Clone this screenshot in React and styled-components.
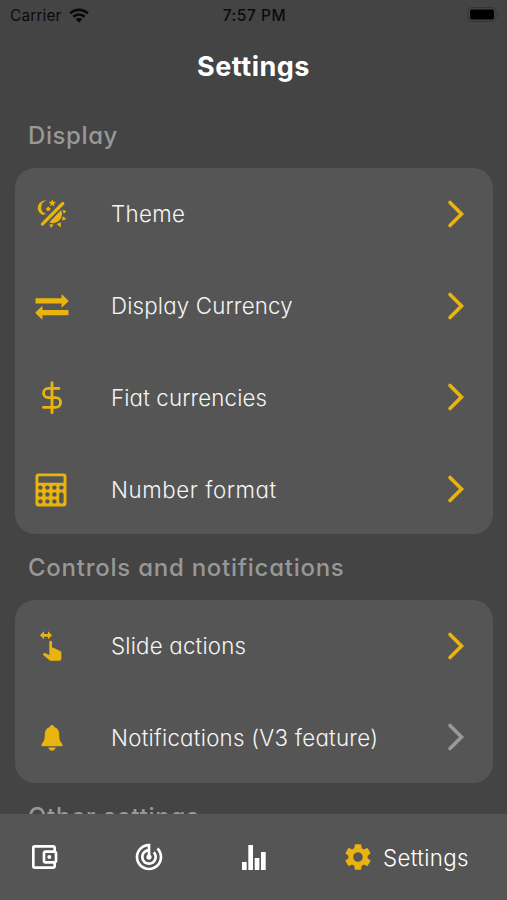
import React from "react";
import styled, { createGlobalStyle } from "styled-components";
import { MdSettings, MdTrackChanges, MdOutlineAccountBalanceWallet } from "react-icons/md";

const GOLD = "#eab40f";

const GlobalStyle = createGlobalStyle`
  * { box-sizing: border-box; }
  html, body { margin: 0; background: #444; }
  body { font-family: Inter, "Open Sans", sans-serif; font-feature-settings: "cv11", "ss03"; overflow: hidden; }
`;

const Screen = styled.div`
  width: 507px;
  height: 900px;
  display: flex;
  flex-direction: column;
  background: #444;
  color: #f4f4f4;
  overflow: hidden;
`;

const StatusBar = styled.header`
  height: 30px;
  flex: none;
  display: grid;
  grid-template-columns: 1fr auto 1fr;
  align-items: center;
  padding: 0 8px 0 10px;
  color: #0b0b0b;
  font-size: 15.5px;
  font-weight: 400;
  font-feature-settings: normal;
`;

const Carrier = styled.div`
  display: flex;
  align-items: center;
  gap: 7px;
  letter-spacing: 0.1px;
`;

const Clock = styled.div`
  font-weight: 550;
  letter-spacing: 0.55px;
`;

const BatterySlot = styled.div`
  display: flex;
  justify-content: flex-end;
`;

const Title = styled.h1`
  margin: 0;
  height: 72px;
  padding-top: 1px;
  flex: none;
  display: flex;
  align-items: center;
  justify-content: center;
  font-size: 27px;
  font-weight: 650;
  letter-spacing: 0.5px;
  color: #fff;
`;

const Content = styled.main`
  flex: 1;
  min-height: 0;
  overflow: hidden;
  padding: 0 14px 0 15px;
`;

const SectionTitle = styled.h2`
  margin: 0;
  height: 66px;
  padding-left: 13px;
  display: flex;
  align-items: center;
  font-size: 24px;
  font-weight: 500;
  letter-spacing: ${(p) => p.$track}px;
  color: #989898;
  white-space: nowrap;
`;

const Card = styled.section`
  height: ${(p) => p.$rows * 91.5}px;
  background: #555;
  border-radius: 20px;
`;

const Row = styled.div`
  height: ${(p) => p.$height}px;
  display: grid;
  grid-template-columns: 74px 1fr 20px;
  align-items: center;
  padding: 0 27px 0 0;
  color: ${GOLD};
`;

const IconSlot = styled.div`
  display: flex;
  justify-content: center;
  svg { display: block; }
`;

const Label = styled.span`
  padding-left: 22px;
  font-size: 22.3px;
  font-weight: 340;
  letter-spacing: ${(p) => p.$track}px;
  color: #f4f4f4;
  white-space: nowrap;
`;

const Chevron = styled.svg`
  display: block;
  width: 20px;
  height: 30px;
  fill: none;
  stroke: ${(p) => (p.$muted ? "#999" : GOLD)};
  stroke-width: 3.6;
  stroke-linecap: round;
`;

const TabBar = styled.nav`
  flex: none;
  height: 86px;
  background: #555;
  display: grid;
  grid-template-columns: 97px 104px 105px 201px;
  align-items: center;
`;

const Tab = styled.div`
  display: flex;
  align-items: center;
  justify-content: ${(p) => (p.$active ? "flex-start" : "center")};
  padding-left: ${(p) => p.$pad || 0}px;
  padding-right: ${(p) => p.$end || 0}px;
  color: #fff;
  svg { flex: none; color: ${(p) => (p.$active ? GOLD : "#fff")}; }
`;

const TabLabel = styled.span`
  margin-left: 9px;
  font-size: 22.3px;
  font-weight: 340;
  letter-spacing: 0.35px;
`;

const Wifi = () => (
  <svg width="20" height="15" viewBox="0 0 20 15" fill="none" stroke="#080808" strokeWidth="2.7">
    <path d="M1.2 5.4A12.6 12.6 0 0 1 18.8 5.4" />
    <path d="M4.4 8.8A8 8 0 0 1 15.6 8.8" />
    <path d="M10 14.6L6.8 11.3A4.6 4.6 0 0 1 13.2 11.3Z" fill="#080808" stroke="none" />
  </svg>
);

const Battery = () => (
  <svg width="33" height="16" viewBox="-.5 .5 33 16">
    <rect x="1.5" y="1" width="28" height="14" rx="4" fill="none" stroke="#343434" strokeWidth="1" />
    <rect x="3.5" y="3" width="24" height="10" rx="2" fill="#000" />
    <path d="M31 5.5q1.6 2.5 0 5z" fill="#343434" />
  </svg>
);

const ThemeIcon = () => (
  <svg width="30" height="30" viewBox="-1 -.5 30 30" fill={GOLD} overflow="visible">
    <path d="M8.6 1.2A7.4 7.4 0 0 0 4.6 15.4L8 14.4A6.8 6.8 0 0 1 8.6 1.2Z" />
    <path d="M14.3 0l1.1 2.2 2.5.3-1.9 1.8.5 2.5-2.2-1.3-2.2 1.3.5-2.5-1.9-1.8 2.5-.3z" />
    <path d="M10.3 6.8l1 1.5 1.7.3-1.2 1.3.2 1.8-1.7-.8-1.7.8.2-1.8-1.2-1.3 1.7-.3z" />
    <path d="M24.8 4L4.4 24.6" stroke={GOLD} strokeWidth="3.2" strokeLinecap="round" />
    <path d="M23 10.6A9 9 0 0 1 11.4 22.8Z" />
    <path d="M24.6 10.2l3.8 1.2-2.6 3zM25 16.8l3.4 3-4.6 1.3zM18.6 24.4l4.2-1.4.2 5zM11.4 24.7l4.2.2-2.7 3.5z" />
  </svg>
);

const SwapIcon = () => (
  <svg width="34" height="28" viewBox="0 -2 34 28" fill={GOLD}>
    <path d="M1 4.3H26.5V1.1Q26.5 0 27.4.8L33.1 6.2Q33.8 7 33.1 7.8L27.4 13.1Q26.5 13.8 26.5 12.8V9.5H1Q.5 9.5.5 9V4.8Q.5 4.3 1 4.3Z" />
    <path d="M33 16.1H7.5V12.9Q7.5 11.8 6.6 12.6L.9 18Q.2 18.8.9 19.6L6.6 24.9Q7.5 25.6 7.5 24.6V21.3H33Q33.5 21.3 33.5 20.8V16.6Q33.5 16.1 33 16.1Z" />
  </svg>
);

const DollarIcon = () => (
  <svg width="22" height="34" viewBox="0 -.7 22 34" fill="none" stroke={GOLD} strokeWidth="2.8" strokeLinecap="round">
    <path d="M11 2V32" />
    <path d="M18 7.7H7.2A4.6 4.6 0 0 0 7.2 17H14.8A4.7 4.7 0 0 1 14.8 26.6H2.3" />
  </svg>
);

const CalculatorIcon = () => (
  <svg width="34" height="35" viewBox="0 -1 34 35">
    <rect x=".5" y=".5" width="31" height="33" rx="3" fill={GOLD} />
    <rect x="3.4" y="3.2" width="25.2" height="6.6" rx=".8" fill="#555" />
    {[14.6, 21.5, 28.4].map((y, r) =>
      [5.4, 12.4, 19.4, 26.4].map((x, c) =>
        c === 3 && r > 0 ? null : <circle key={`${r}-${c}`} cx={x} cy={y} r="2.2" fill="#555" />
      )
    )}
    <rect x="24.2" y="19.3" width="4.4" height="11.3" rx="2.2" fill="#555" />
  </svg>
);

const SwipeIcon = () => (
  <svg width="32" height="32" viewBox="0 0 24 24" fill={GOLD}>
    <path d="M6 1L3 4L6 7V5H9V7L12 4L9 1V3H6V1M11 8A1 1 0 0 0 10 9V19L6.8 17.28H6.58C6.3 17.28 6.03 17.39 5.84 17.6L5 18.37L9.9 22.57C10.16 22.84 10.5 23 10.9 23H17.5C18.32 23 19 22.29 19 21.5V17.14C19 16.56 18.68 16.03 18.15 15.79L13.15 13.29L12 13.16V9A1 1 0 0 0 11 8Z" />
  </svg>
);

const BellIcon = () => (
  <svg width="22" height="27" viewBox="0 -.5 22 27" fill={GOLD}>
    <path d="M11 .5C12.4.5 13 1.4 13.2 2.4C16.6 3.4 18.2 6.4 18.2 9.6C18.2 15.8 19.5 17.4 21 19.1C22.1 20.4 21.4 21.7 20 21.7H2C.6 21.7-.1 20.4 1 19.1C2.5 17.4 3.8 15.8 3.8 9.6C3.8 6.4 5.4 3.4 8.8 2.4C9 1.4 9.6.5 11 .5Z" />
    <path d="M7.3 23H14.7C14.3 25 12.9 26.2 11 26.2S7.7 25 7.3 23Z" />
  </svg>
);

const StatsIcon = () => (
  <svg width="24" height="26" viewBox="0 -1 24 26" fill="currentColor">
    <rect x="0" y="17" width="4.7" height="8" />
    <rect x="6.3" y="0" width="4.7" height="25" />
    <rect x="12.7" y="13" width="4.7" height="12" />
    <rect x="19" y="7" width="4.7" height="18" />
  </svg>
);

const sections = [
  {
    title: "Display",
    track: 0.6,
    rowHeight: 91.8,
    rows: [
      { label: "Theme", track: 0.35, Icon: ThemeIcon },
      { label: "Display Currency", track: 0.16, Icon: SwapIcon },
      { label: "Fiat currencies", track: 0.13, Icon: DollarIcon },
      { label: "Number format", track: 0.58, Icon: CalculatorIcon },
    ],
  },
  {
    title: "Controls and notifications",
    track: 0.75,
    rowHeight: 91.4,
    rows: [
      { label: "Slide actions", track: 0.2, Icon: SwipeIcon },
      { label: "Notifications (V3 feature)", track: 0.25, Icon: BellIcon, muted: true },
    ],
  },
  { title: "Other settings", track: 0.7, rows: [] },
];

export default function App() {
  return (
    <Screen>
      <GlobalStyle />
      <StatusBar>
        <Carrier>Carrier <Wifi /></Carrier>
        <Clock>7:57 PM</Clock>
        <BatterySlot><Battery /></BatterySlot>
      </StatusBar>
      <Title>Settings</Title>
      <Content>
        {sections.map((s) => (
          <React.Fragment key={s.title}>
            <SectionTitle $track={s.track}>{s.title}</SectionTitle>
            <Card $rows={s.rows.length}>
              {s.rows.map(({ label, track, Icon, muted }) => (
                <Row key={label} $height={s.rowHeight}>
                  <IconSlot><Icon /></IconSlot>
                  <Label $track={track}>{label}</Label>
                  <Chevron $muted={muted} viewBox="0 0 20 30">
                    <path d="M4 3.5L15.5 15L4 26.5" />
                  </Chevron>
                </Row>
              ))}
            </Card>
          </React.Fragment>
        ))}
      </Content>
      <TabBar>
        <Tab $end={9}><MdOutlineAccountBalanceWallet size={32} /></Tab>
        <Tab><MdTrackChanges size={32} /></Tab>
        <Tab><StatsIcon /></Tab>
        <Tab $active $pad={36}>
          <MdSettings size={32} />
          <TabLabel>Settings</TabLabel>
        </Tab>
      </TabBar>
    </Screen>
  );
}
